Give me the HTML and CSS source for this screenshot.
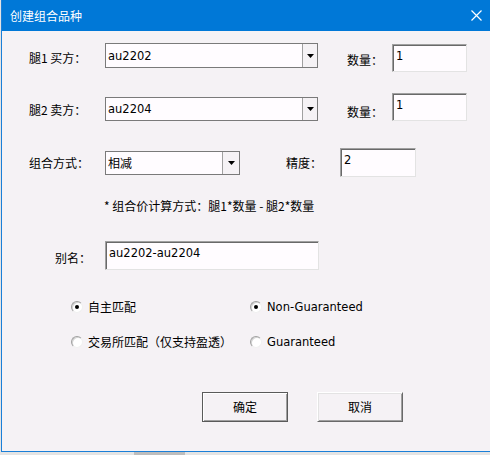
FILE: index.html
```html
<!DOCTYPE html>
<html lang="zh-CN">
<head>
<meta charset="utf-8">
<title>创建组合品种</title>
<link rel="stylesheet" href="styles.css">
</head>
<body>
<div class="window">
  <div class="titlebar">
    <span class="title">创建组合品种</span>
    <svg class="close" width="11" height="11" viewBox="0 0 11 11"><path d="M0.5 0.5 L10.5 10.5 M10.5 0.5 L0.5 10.5" stroke="#fff" stroke-width="1.2" fill="none"/></svg>
  </div>
  <div class="content">
    <div class="row r1">
      <div class="label lab1">腿1 买方：</div>
      <div class="combo wide c1"><span class="val lat">au2202</span><span class="drop"><svg width="7" height="4" viewBox="0 0 7 4"><polygon points="0,0 7,0 3.5,4" fill="#000"/></svg></span></div>
      <div class="label qty q1">数量：</div>
      <div class="edit qtyedit e1"><span class="lat">1</span></div>
    </div>
    <div class="row r2">
      <div class="label lab1 l2">腿2 卖方：</div>
      <div class="combo wide c2"><span class="val lat">au2204</span><span class="drop"><svg width="7" height="4" viewBox="0 0 7 4"><polygon points="0,0 7,0 3.5,4" fill="#000"/></svg></span></div>
      <div class="label qty q2">数量：</div>
      <div class="edit qtyedit"><span class="lat">1</span></div>
    </div>
    <div class="row r3">
      <div class="label lab1 l3">组合方式：</div>
      <div class="combo narrow c3"><span class="val">相减</span><span class="drop"><svg width="7" height="4" viewBox="0 0 7 4"><polygon points="0,0 7,0 3.5,4" fill="#000"/></svg></span></div>
      <div class="label prec">精度：</div>
      <div class="edit precedit"><span class="lat">2</span></div>
    </div>
    <div class="note">* 组合价计算方式：腿1*数量 - 腿2*数量</div>
    <div class="row r4">
      <div class="label alias">别名：</div>
      <div class="edit aliasedit"><span class="lat">au2202-au2204</span></div>
    </div>
    <div class="radios">
      <div class="opt"><span class="radio on"></span><span>自主匹配</span></div>
      <div class="opt"><span class="radio on"></span><span class="lat">Non-Guaranteed</span></div>
      <div class="opt"><span class="radio"></span><span>交易所匹配（仅支持盈透）</span></div>
      <div class="opt"><span class="radio"></span><span class="lat">Guaranteed</span></div>
    </div>
    <div class="buttons">
      <div class="btn default"><span>确定</span></div>
      <div class="btn cancel"><span>取消</span></div>
    </div>
  </div>
</div>
<div class="under"><div class="underbtn"></div></div>
</body>
</html>
```
FILE: styles.css
```css
html, body {
  margin: 0;
  padding: 0;
}
body {
  width: 490px;
  height: 455px;
  overflow: hidden;
  background: #e4e4e4;
  font-family: "Noto Sans CJK SC", "DejaVu Sans", sans-serif;
  font-size: 12px;
  color: #000;
}
.window {
  box-sizing: border-box;
  margin-left: 1px;
  width: 489px;
  height: 452px;
  border-left: 1px solid #1a7fd8;
  border-bottom: 1px solid #1a7fd8;
  background: #f5f2f5;
}
.titlebar {
  height: 31px;
  background: #0078d7;
  display: flex;
  align-items: center;
  justify-content: space-between;
  padding: 0 8px 0 8px;
}
.title {
  color: #fff;
  font-size: 12px;
  line-height: 16px;
}
.close {
  display: block;
}
.content {
  padding-left: 27px;
}
.lat {
  font-family: "DejaVu Sans", "Noto Sans CJK SC", sans-serif;
  font-size: 11.5px;
}
.row {
  display: flex;
  align-items: flex-start;
}
.r1 { margin-top: 12px; height: 29px; }
.r2 { margin-top: 21px; height: 28px; }
.r3 { margin-top: 27px; height: 29px; }
.r4 { margin-top: 27px; height: 29px; }
.label {
  line-height: 16px;
  white-space: nowrap;
}
.lab1 { width: 76px; margin-top: 7px; }
.l2 { margin-top: 9px; }
.l3 { margin-top: 7px; }
.qty { width: 45px; margin-left: 29px; margin-top: 9px; }
.q2 { margin-top: 11px; }
.prec { width: 54px; margin-left: 46px; margin-top: 7px; }
.alias { width: 50px; padding-left: 26px; margin-top: 9px; }

.combo {
  box-sizing: border-box;
  display: flex;
  align-items: stretch;
  border: 1px solid #7a7a7a;
  background: #fffcff;
}
.wide { width: 213px; height: 25px; }
.c2 { margin-top: 4px; height: 24px; }
.narrow { width: 135px; height: 24px; margin-top: 3px; }
.val {
  flex: 1;
  padding-left: 2px;
  display: flex;
  align-items: center;
  line-height: 16px;
}
.drop {
  width: 14px;
  border-left: 1px solid #a0a0a0;
  background: #f5f2f5;
  display: flex;
  align-items: center;
  justify-content: center;
}
.narrow .drop { width: 16px; }
.drop svg { display: block; margin-left: 1px; }

.edit {
  box-sizing: border-box;
  border-style: solid;
  border-width: 1px;
  border-color: #a0a0a0 #e3e3e3 #e3e3e3 #a0a0a0;
  box-shadow: inset 1px 1px 0 #696969;
  background: #fffcff;
  padding: 2px 0 0 3px;
  line-height: 16px;
}
.qtyedit { width: 75px; height: 28px; }
.e1 { margin-top: 1px; }
.precedit { width: 76px; height: 29px; }
.aliasedit { width: 214px; height: 29px; }

.note {
  margin-top: 21px;
  margin-left: 75px;
  height: 16px;
  line-height: 16px;
}

.radios {
  margin-top: 29px;
  margin-left: 42px;
  display: grid;
  grid-template-columns: 179px auto;
  row-gap: 19px;
}
.opt {
  display: flex;
  align-items: center;
  height: 16px;
  line-height: 16px;
  white-space: nowrap;
}
.radio {
  box-sizing: border-box;
  width: 12px;
  height: 12px;
  border-radius: 50%;
  border: 1px solid;
  border-color: #a0a0a0 #f0f0f0 #f0f0f0 #a0a0a0;
  box-shadow: inset 1px 1px 0 #d4d4d4;
  background: #fff;
  margin-right: 5px;
  display: flex;
  align-items: center;
  justify-content: center;
}
.radio.on::after {
  content: "";
  width: 4px;
  height: 4px;
  border-radius: 50%;
  background: #000;
}

.buttons {
  margin-top: 42px;
  margin-left: 173px;
  display: flex;
  gap: 29px;
}
.btn {
  box-sizing: border-box;
  width: 86px;
  height: 30px;
  display: flex;
  align-items: center;
  justify-content: center;
  background: #f5f2f5;
  line-height: 16px;
}
.btn.default {
  border: 1px solid #5a5a5a;
  box-shadow: inset 1px 1px 0 #ffffff, inset -1px -1px 0 #a0a0a0;
}
.btn.cancel {
  border-style: solid;
  border-width: 1px;
  border-color: #ffffff #696969 #696969 #ffffff;
  box-shadow: inset 1px 1px 0 #e3e3e3, inset -1px -1px 0 #a0a0a0;
}

.under {
  height: 3px;
  display: flex;
}
.underbtn {
  margin-left: 134px;
  width: 51px;
  height: 3px;
  background: #bdbdbd;
}
```
